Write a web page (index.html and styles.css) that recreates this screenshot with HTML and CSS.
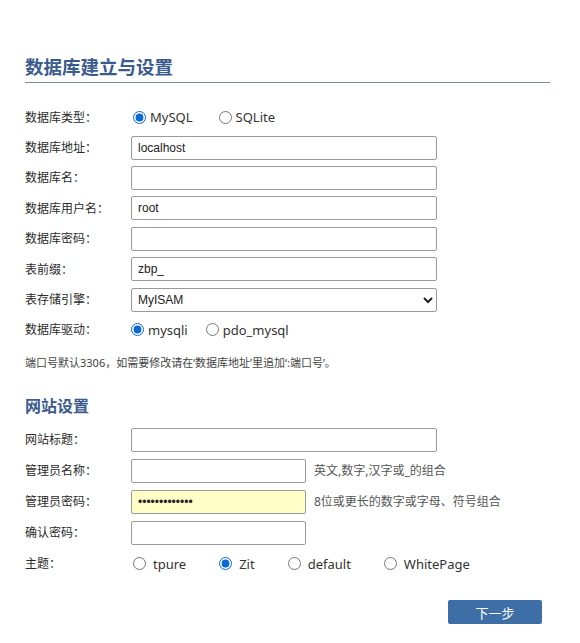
FILE: index.html
```html
<!DOCTYPE html>
<html lang="zh-CN">
<head>
  <meta charset="UTF-8">
  <meta name="viewport" content="width=device-width, initial-scale=1.0">
  <title>数据库建立与设置</title>
  <link rel="stylesheet" href="styles.css">
</head>
<body>
  <div class="page">
    <h2 class="title">数据库建立与设置</h2>

    <div class="form db-form">
      <div class="row">
        <label class="label">数据库类型<span class="colon">：</span></label>
        <div class="options opt-wide">
          <label class="option"><input type="radio" name="dbtype" checked><span>MySQL</span></label>
          <label class="option"><input type="radio" name="dbtype"><span>SQLite</span></label>
        </div>
      </div>
      <div class="row">
        <label class="label" for="dbhost">数据库地址<span class="colon">：</span></label>
        <input class="input" id="dbhost" type="text" value="localhost">
      </div>
      <div class="row">
        <label class="label" for="dbname">数据库名<span class="colon">：</span></label>
        <input class="input" id="dbname" type="text">
      </div>
      <div class="row">
        <label class="label" for="dbuser">数据库用户名<span class="colon">：</span></label>
        <input class="input" id="dbuser" type="text" value="root">
      </div>
      <div class="row">
        <label class="label" for="dbpass">数据库密码<span class="colon">：</span></label>
        <input class="input" id="dbpass" type="text">
      </div>
      <div class="row">
        <label class="label" for="dbpre">表前缀<span class="colon">：</span></label>
        <input class="input" id="dbpre" type="text" value="zbp_">
      </div>
      <div class="row">
        <label class="label" for="dbengine">表存储引擎<span class="colon">：</span></label>
        <select class="input select" id="dbengine">
          <option selected>MyISAM</option>
          <option>InnoDB</option>
        </select>
      </div>
      <div class="row">
        <label class="label">数据库驱动<span class="colon">：</span></label>
        <div class="options opt-narrow">
          <label class="option"><input type="radio" name="dbdriver" checked><span>mysqli</span></label>
          <label class="option"><input type="radio" name="dbdriver"><span>pdo_mysql</span></label>
        </div>
      </div>
    </div>

    <p class="note">端口号默认3306，如需要修改请在‘数据库地址’里追加‘:端口号’。</p>

    <h3 class="section">网站设置</h3>

    <div class="form site-form">
      <div class="row">
        <label class="label" for="sitename">网站标题<span class="colon">：</span></label>
        <input class="input" id="sitename" type="text">
      </div>
      <div class="row">
        <label class="label" for="username">管理员名称<span class="colon">：</span></label>
        <input class="input short" id="username" type="text">
        <span class="hint">英文,数字,汉字或_的组合</span>
      </div>
      <div class="row">
        <label class="label" for="password">管理员密码<span class="colon">：</span></label>
        <input class="input short filled" id="password" type="password" value="zblogphp12345">
        <span class="hint">8位或更长的数字或字母、符号组合</span>
      </div>
      <div class="row">
        <label class="label" for="repassword">确认密码<span class="colon">：</span></label>
        <input class="input short" id="repassword" type="password">
      </div>
      <div class="row">
        <label class="label">主题<span class="colon">：</span></label>
        <div class="options opt-theme">
          <label class="option"><input type="radio" name="theme"><span>tpure</span></label>
          <label class="option"><input type="radio" name="theme" checked><span>Zit</span></label>
          <label class="option"><input type="radio" name="theme"><span>default</span></label>
          <label class="option"><input type="radio" name="theme"><span>WhitePage</span></label>
        </div>
      </div>
    </div>

    <div class="actions">
      <button type="submit" class="next">下一步</button>
    </div>
  </div>
</body>
</html>
```

FILE: styles.css
```css
* {
  box-sizing: border-box;
}
body {
  margin: 0;
  background-color: #fff;
  color: #333;
  font-family: "Noto Sans", "Noto Sans CJK SC", sans-serif;
}
.page {
  width: 580px;
  padding: 55px 30px 0 25px;
}
.title {
  margin: 0;
  padding-bottom: 3px;
  font-size: 18.5px;
  line-height: 24px;
  font-weight: bold;
  color: #3b5b8e;
  border-bottom: 1px solid #7b8aa3;
}
.db-form {
  margin-top: 19px;
}
.db-form .row {
  height: 30.4px;
}
.site-form {
  margin-top: 8px;
}
.site-form .row {
  height: 31px;
}
.row {
  display: flex;
  align-items: center;
}
.label {
  flex: none;
  width: 106px;
  font-size: 12px;
  line-height: 16px;
  color: #2b2b2b;
}
.colon {
  font-family: "Noto Sans CJK TC", sans-serif;
}
.input {
  width: 306px;
  height: 24px;
  margin: 0;
  padding: 0 6px;
  border: 1px solid #9a9a9a;
  border-radius: 2px;
  background-color: #fff;
  font-family: "Liberation Sans", "Noto Sans CJK SC", sans-serif;
  font-size: 12px;
  color: #222;
}
.input.short {
  width: 175px;
}
.input.filled {
  background-color: #fefec6;
}
.select {
  padding: 0 2px;
}
.hint {
  margin-left: 8px;
  font-size: 12px;
  line-height: 16px;
  color: #555;
}
.options {
  display: flex;
  align-items: center;
}
.option {
  display: inline-flex;
  align-items: center;
  gap: 4px;
  font-size: 13px;
  line-height: 18px;
  color: #333;
}
.option input {
  width: 13px;
  height: 13px;
  margin: 0;
  accent-color: #0b68d7;
}
.opt-wide .option {
  margin-right: 26px;
}
.opt-wide .option:first-child {
  margin-left: 2px;
}
.opt-narrow .option {
  margin-right: 18px;
}
.opt-theme .option {
  gap: 7px;
  margin-right: 33px;
}
.opt-theme .option:first-child {
  margin-left: 2px;
}
.note {
  margin: 10px 0 0;
  font-size: 11px;
  line-height: 16px;
  color: #444;
}
.section {
  margin: 25px 0 0;
  font-size: 16px;
  line-height: 20px;
  font-weight: bold;
  color: #3b5b8e;
}
.actions {
  display: flex;
  justify-content: flex-end;
  margin-top: 21px;
  padding-right: 8px;
}
.next {
  width: 94px;
  height: 24px;
  border: none;
  border-radius: 2px;
  background-color: #3e6ea6;
  color: #fff;
  font-family: "Noto Sans CJK SC", sans-serif;
  font-size: 13px;
  cursor: pointer;
}
```
